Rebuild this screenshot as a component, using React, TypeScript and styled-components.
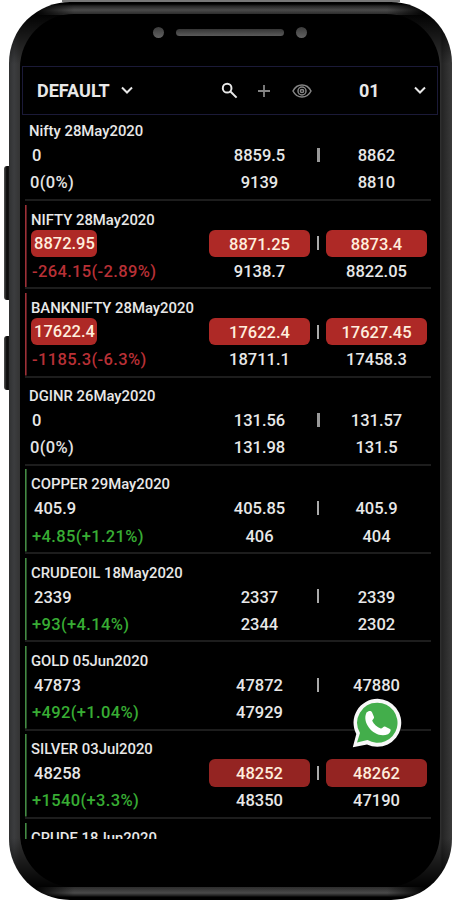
import React from 'react';
import styled, { createGlobalStyle } from 'styled-components';

const Global = createGlobalStyle`
  * { box-sizing: border-box; }
  body { margin: 0; background: #fff; font-family: Roboto, "Liberation Sans", sans-serif; }
`;

const Stage = styled.main`
  position: relative;
  width: 452px;
  height: 900px;
  overflow: hidden;
  padding: 2px 0 0 9px;
  background: linear-gradient(#777, #777) 62px 0 / 338px 2px no-repeat, #fff;
`;

const SideKey = styled.div<{ $top: number; $height: number }>`
  position: absolute;
  left: 4px;
  top: ${p => p.$top}px;
  width: 7px;
  height: ${p => p.$height}px;
  border-radius: 3px 0 0 3px;
  background: linear-gradient(90deg, #555, #0a0a0a 40%, #222);
`;

const Phone = styled.div`
  position: relative;
  width: 443px;
  height: 898px;
  padding: 12px 12px 13px 11px;
  border-radius: 61px;
  overflow: hidden;
  background:
    linear-gradient(90deg, #000 25px, transparent 65px, transparent 378px, #000 418px) 0 0 / 100% 13px no-repeat,
    linear-gradient(#000 2px, #262626 4px, #4a4a4a 8px, #2c2c2c 12px) 0 0 / 100% 13px no-repeat,
    linear-gradient(90deg, #000 25px, transparent 65px, transparent 378px, #000 418px) 0 100% / 100% 13px no-repeat,
    linear-gradient(#2c2c2c, #4a4a4a 6px, #1a1a1a 9px, #000 10px) 0 100% / 100% 13px no-repeat,
    linear-gradient(#000 10px, transparent 62px, transparent 836px, #000 886px),
    linear-gradient(90deg, #303132, #3c3d3f 5px, #333 11px, #333 431px, #242424 433px, #3a3a3a 443px);
`;

const Screen = styled.div`
  height: 873px;
  border-radius: 54px;
  background: #000;
  overflow: hidden;
`;

const Earpiece = styled.div`
  display: flex;
  align-items: center;
  justify-content: center;
  gap: 12px;
  height: 52px;
  padding: 0 0 16px 0;
`;

const Sensor = styled.i`
  width: 11px;
  height: 11px;
  border-radius: 50%;
  background: linear-gradient(#3c3c3c, #626262);
`;

const Speaker = styled.i`
  width: 108px;
  height: 7px;
  border-radius: 4px;
  background: linear-gradient(#353535, #5a5a5a);
`;

const Toolbar = styled.header`
  display: grid;
  grid-template-columns: 84px 100px 36px 35px 67px 55px 1fr;
  align-items: center;
  width: 416px;
  height: 49px;
  margin-left: 2px;
  padding-left: 14px;
  border: 1px solid #1b1a38;
  color: #e8e8e8;
  font-size: 18px;
  font-weight: 700;
  svg { display: block; }
`;

const List = styled.div`
  height: 726px;
  margin-top: -2.3px;
  padding-left: 5px;
  overflow: hidden;
`;

type Trend = 'flat' | 'down' | 'up';
const barColor = { flat: 'transparent', down: '#9d3037', up: '#438a43' };
const changeColor = { flat: '#e4e4e4', down: '#b83036', up: '#38ad34' };

const Row = styled.section<{ $trend: Trend }>`
  display: grid;
  grid-template-columns: 184px 101px 16px 101px;
  grid-template-rows: 28.5px 27.5px 1fr;
  align-items: center;
  width: 406px;
  height: 88.3px;
  padding-bottom: 2px;
  border-bottom: 2px solid #1d1d1d;
  background: linear-gradient(${p => barColor[p.$trend]}, ${p => barColor[p.$trend]}) 0 3.5px / 1.6px 82.5px no-repeat;
  color: #e8e8e8;
  font-size: 16.5px;
  font-weight: 500;
  white-space: nowrap;
  text-align: center;
  > * { min-width: 0; }
`;

const Name = styled.div<{ $flat: boolean }>`
  grid-column: 1 / -1;
  align-self: end;
  height: 20px;
  line-height: 20px;
  padding-left: ${p => (p.$flat ? 4 : 6)}px;
  text-align: left;
  font-size: 14.85px;
`;

const Last = styled.div<{ $hot: boolean; $flat: boolean }>`
  justify-self: start;
  height: 27.5px;
  line-height: ${p => (p.$hot ? 28 : 29.5)}px;
  width: 66px;
  margin-left: ${p => (p.$flat ? 4 : 6)}px;
  padding-left: 3px;
  text-align: left;
  border-radius: 6px;
  color: ${p => (p.$hot ? '#ffeedd' : '#e8e8e8')};
  background: ${p => (p.$hot ? '#ae2926' : 'transparent')};
`;

const Quote = styled.div<{ $fill?: string }>`
  height: 27.5px;
  line-height: 29px;
  border-radius: 6px;
  color: ${p => (p.$fill ? '#ffeedd' : '#e8e8e8')};
  background: ${p => p.$fill || 'transparent'};
`;

const Divider = styled.i<{ $flat: boolean }>`
  justify-self: center;
  width: ${p => (p.$flat ? 3 : 2)}px;
  height: 14px;
  background: ${p => (p.$flat ? '#999' : '#aaa')};
`;

const Change = styled.div<{ $trend: Trend }>`
  padding-left: ${p => (p.$trend === 'flat' ? 5 : 7)}px;
  text-align: left;
  color: ${p => changeColor[p.$trend]};
  letter-spacing: 0.35px;
`;

const Chat = styled.svg`
  position: absolute;
  left: 343px;
  top: 696px;
`;

interface Item {
  name: string;
  last: string;
  change: string;
  trend: Trend;
  bid: string;
  ask: string;
  high: string;
  low: string;
  hotLast?: boolean;
  fill?: string;
}

const items: Item[] = [
  { name: 'Nifty 28May2020', last: '0', change: '0(0%)', trend: 'flat', bid: '8859.5', ask: '8862', high: '9139', low: '8810' },
  { name: 'NIFTY 28May2020', last: '8872.95', change: '-264.15(-2.89%)', trend: 'down', bid: '8871.25', ask: '8873.4', high: '9138.7', low: '8822.05', hotLast: true, fill: '#ae2926' },
  { name: 'BANKNIFTY 28May2020', last: '17622.4', change: '-1185.3(-6.3%)', trend: 'down', bid: '17622.4', ask: '17627.45', high: '18711.1', low: '17458.3', hotLast: true, fill: '#ae2926' },
  { name: 'DGINR 26May2020', last: '0', change: '0(0%)', trend: 'flat', bid: '131.56', ask: '131.57', high: '131.98', low: '131.5' },
  { name: 'COPPER 29May2020', last: '405.9', change: '+4.85(+1.21%)', trend: 'up', bid: '405.85', ask: '405.9', high: '406', low: '404' },
  { name: 'CRUDEOIL 18May2020', last: '2339', change: '+93(+4.14%)', trend: 'up', bid: '2337', ask: '2339', high: '2344', low: '2302' },
  { name: 'GOLD 05Jun2020', last: '47873', change: '+492(+1.04%)', trend: 'up', bid: '47872', ask: '47880', high: '47929', low: '' },
  { name: 'SILVER 03Jul2020', last: '48258', change: '+1540(+3.3%)', trend: 'up', bid: '48252', ask: '48262', high: '48350', low: '47190', fill: '#942422' },
  { name: 'CRUDE 18Jun2020', last: '', change: '', trend: 'up', bid: '', ask: '', high: '', low: '' },
];

const Chevron = () => (
  <svg width="12" height="9" viewBox="0 0 12 9" fill="none" stroke="#e8e8e8" strokeWidth="2">
    <path d="M1 1.500l5 5 5-5" />
  </svg>
);

export default function App() {
  return (
    <>
      <Global />
      <Stage>
        <SideKey $top={166} $height={134} />
        <SideKey $top={336} $height={54} />
        <Phone>
          <Screen>
            <Earpiece><Sensor /><Speaker /><Sensor /></Earpiece>
            <Toolbar>
              <span>DEFAULT</span>
              <Chevron />
              <svg width="17" height="17" viewBox="0 0 18 18" fill="none" stroke="#e8e8e8" strokeWidth="2.1">
                <circle cx="6.5" cy="6.5" r="4.6" /><path d="M10 10l6.500 6.500" />
              </svg>
              <svg width="14" height="14" viewBox="0 0 14 14" stroke="#858585" strokeWidth="1.8">
                <path d="M7 1v12M1 7h12" />
              </svg>
              <svg width="20" height="14" viewBox="0 0 20 14" fill="none" stroke="#858585" strokeWidth="1.5">
                <path d="M1 7C5-1 15-1 19 7 15 15 5 15 1 7z" /><circle cx="10" cy="7" r="4" /><circle cx="10" cy="7" r="1.6" />
              </svg>
              <span>01</span>
              <Chevron />
            </Toolbar>
            <List>
              {items.map(item => {
                const flat = item.trend === 'flat';
                return (
                  <Row key={item.name} $trend={item.trend}>
                    <Name $flat={flat}>{item.name}</Name>
                    <Last $flat={flat} $hot={!!item.hotLast}>{item.last}</Last>
                    <Quote $fill={item.fill}>{item.bid}</Quote>
                    <Divider $flat={flat} />
                    <Quote $fill={item.fill}>{item.ask}</Quote>
                    <Change $trend={item.trend}>{item.change}</Change>
                    <span>{item.high}</span>
                    <span />
                    <span>{item.low}</span>
                  </Row>
                );
              })}
            </List>
          </Screen>
          <Chat width="50" height="50" viewBox="0 0 50 50">
            <path d="M25.500 .8a24 24 0 1 1-10.500 45.700L.8 49.200 4.300 36A24 24 0 0 1 25.500 .8z" fill="#f8f8f8" />
            <path d="M25.500 4.800a20 20 0 1 1-10 37.300L5 44.500 8 35A20 20 0 0 1 25.500 4.800z" fill="#43ae4b" />
            <path d="M14.500 14.500c1.800-1.800 4.500-2.200 5.500-.3l2 4.800c.6 1.400-1.800 2.700-1.800 3.800 1.500 3.500 5 6.500 8.500 7.700 1.500.4 2.800-2.500 4.300-2l5 2.500c1.700 1-.2 4.200-2 5.200C24 41.500 9 26 14.500 14.500z" fill="#fff" />
          </Chat>
        </Phone>
      </Stage>
    </>
  );
}
